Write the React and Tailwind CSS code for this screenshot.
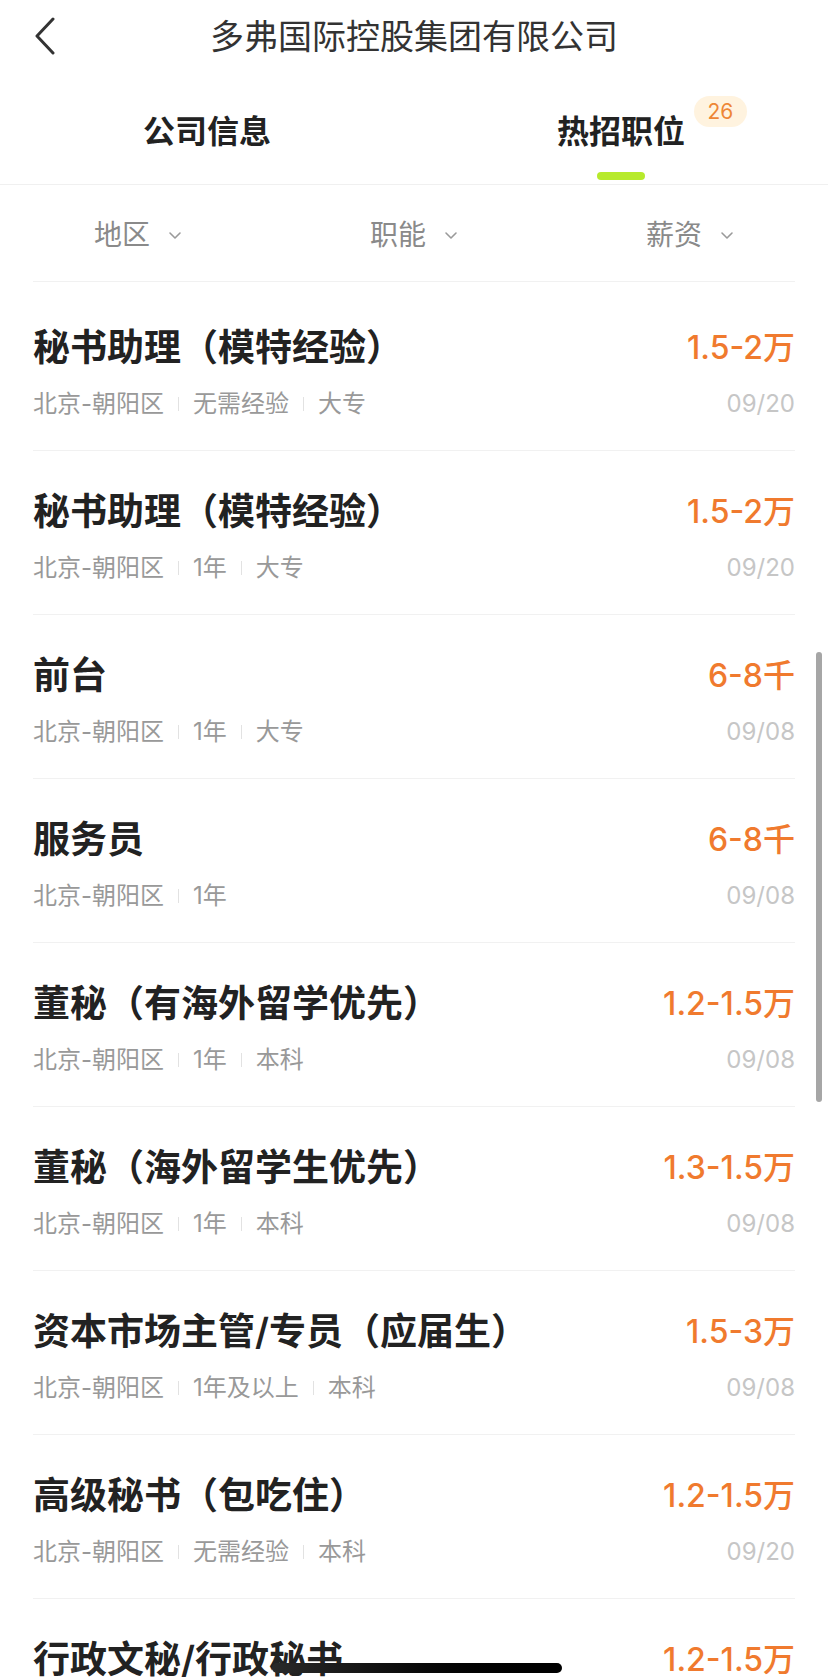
const jobs = [
  { title: '秘书助理（模特经验）', salary: '1.5-2万', tags: ['北京-朝阳区', '无需经验', '大专'], date: '09/20' },
  { title: '秘书助理（模特经验）', salary: '1.5-2万', tags: ['北京-朝阳区', '1年', '大专'], date: '09/20' },
  { title: '前台', salary: '6-8千', tags: ['北京-朝阳区', '1年', '大专'], date: '09/08' },
  { title: '服务员', salary: '6-8千', tags: ['北京-朝阳区', '1年'], date: '09/08' },
  { title: '董秘（有海外留学优先）', salary: '1.2-1.5万', tags: ['北京-朝阳区', '1年', '本科'], date: '09/08' },
  { title: '董秘（海外留学生优先）', salary: '1.3-1.5万', tags: ['北京-朝阳区', '1年', '本科'], date: '09/08' },
  { title: '资本市场主管/专员（应届生）', salary: '1.5-3万', tags: ['北京-朝阳区', '1年及以上', '本科'], date: '09/08' },
  { title: '高级秘书（包吃住）', salary: '1.2-1.5万', tags: ['北京-朝阳区', '无需经验', '本科'], date: '09/20' },
  { title: '行政文秘/行政秘书', salary: '1.2-1.5万', tags: ['北京-朝阳区', '1年', '本科'], date: '09/08' },
]

const filters = ['地区', '职能', '薪资']

function ChevronDown() {
  return (
    <svg width="14" height="9" viewBox="0 0 14 9" fill="none">
      <path d="M2 2 L7 7 L12 2" stroke="#9a9a9a" strokeWidth="1.6" strokeLinecap="round" strokeLinejoin="round" />
    </svg>
  )
}

function JobRow({ job }) {
  return (
    <div className="pt-[36px] pb-[29px] border-b border-[#f1f1f1]">
      {/* title + salary */}
      <div className="flex items-center justify-between h-[49px]">
        <span className="text-[37px] leading-[49px] font-semibold text-[#222222] whitespace-nowrap">{job.title}</span>
        <span className="text-[32px] leading-[49px] font-medium text-[#f07a2e] whitespace-nowrap">{job.salary}</span>
      </div>
      {/* meta */}
      <div className="mt-[15px] flex items-center justify-between h-[34px]">
        <div className="flex items-center text-[24px] leading-[34px] text-[#999999]">
          {job.tags.map((t, i) => (
            <div key={i} className="flex items-center">
              {i > 0 && <span className="mx-[14px] w-px h-[14px] bg-[#e2e2e2]" />}
              <span>{t}</span>
            </div>
          ))}
        </div>
        <span className="text-[24px] leading-[34px] text-[#c6c6c6]">{job.date}</span>
      </div>
    </div>
  )
}

export default function App() {
  return (
    <div
      className="relative w-[828px] h-[1679px] overflow-hidden bg-white"
      style={{ fontFamily: 'Inter, "Noto Sans CJK SC", sans-serif' }}
    >
      {/* Nav bar */}
      <header className="relative h-[74px] flex items-center justify-center">
        <svg className="absolute left-[34px] top-[17px]" width="22" height="38" viewBox="0 0 22 38" fill="none">
          <path d="M19 2 L3 19 L19 36" stroke="#333333" strokeWidth="3" strokeLinecap="round" strokeLinejoin="round" />
        </svg>
        <span className="text-[34px] leading-[42px] text-[#333333]">多弗国际控股集团有限公司</span>
      </header>

      {/* Tabs */}
      <div className="flex border-b border-[#f0f0f0]">
        <div className="flex-1 flex flex-col items-center pt-[36px] pb-[4px]">
          <span className="text-[32px] leading-[44px] font-bold text-[#222222]">公司信息</span>
          <span className="mt-[18px] h-[8px]" />
        </div>
        <div className="flex-1 flex flex-col items-center pt-[36px] pb-[4px]">
          <div className="relative">
            <span className="text-[32px] leading-[44px] font-bold text-[#222222]">热招职位</span>
            <span className="absolute left-[137px] top-[-14px] h-[31px] w-[53px] flex items-center justify-center rounded-full bg-[#fff3df] text-[#ee8636] text-[21px]">
              26
            </span>
          </div>
          <span className="mt-[18px] w-[48px] h-[8px] rounded-full bg-[#b7ea2c]" />
        </div>
      </div>

      {/* Filters */}
      <div className="flex pt-[32px] pb-[28px]">
        {filters.map((f) => (
          <div key={f} className="flex-1 flex items-center justify-center gap-[18px]">
            <span className="text-[28px] leading-[36px] text-[#8a8a8a]">{f}</span>
            <ChevronDown />
          </div>
        ))}
      </div>

      {/* Job list */}
      <div className="mx-[33px] border-t border-[#f1f1f1] pt-[5px]">
        {jobs.map((job, i) => (
          <JobRow key={i} job={job} />
        ))}
      </div>

      {/* Scrollbar */}
      <div className="absolute right-[6px] top-[652px] w-[6px] h-[450px] rounded-full bg-[#a6a6a6]" />

      {/* Home indicator */}
      <div className="absolute left-[272px] bottom-[6px] w-[290px] h-[10px] rounded-full bg-gradient-to-r from-[#2a2a2a] to-black" />
    </div>
  )
}
